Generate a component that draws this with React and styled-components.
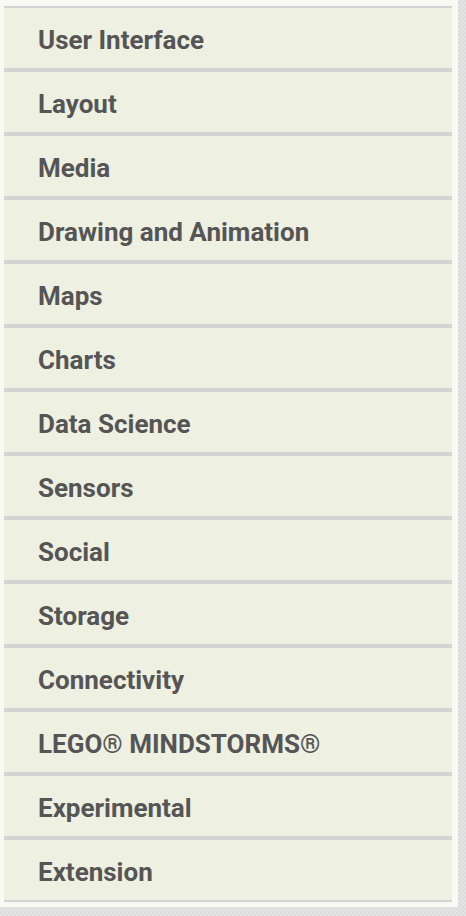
import React from 'react';
import styled, { createGlobalStyle } from 'styled-components';

const Global = createGlobalStyle`
  html, body {
    margin: 0;
    padding: 0;
  }
  body {
    background-color: #dcdcdc;
    background-image:
      linear-gradient(45deg, #e4e4e4 25%, transparent 25%, transparent 75%, #e4e4e4 75%),
      linear-gradient(45deg, #e4e4e4 25%, transparent 25%, transparent 75%, #e4e4e4 75%);
    background-size: 4px 4px;
    background-position: 0 0, 2px 2px;
    font-family: Roboto, "Liberation Sans", sans-serif;
  }
`;

const Panel = styled.div`
  width: 458px;
  box-sizing: border-box;
  padding: 6px 6px 5px 4px;
  background-color: #f8f9f2;
`;

const List = styled.ul`
  margin: 0;
  padding: 0;
  list-style: none;
`;

const Item = styled.li`
  height: 64px;
  box-sizing: border-box;
  display: flex;
  align-items: center;
  padding: 4px 0 0 34px;
  background-color: #eef0e2;
  border-top: 2px solid #d3d3d3;
  border-bottom: 2px solid #d3d3d3;
  font-size: 26px;
  font-weight: 700;
  color: #555555;
  cursor: pointer;
`;

const categories = [
  'User Interface',
  'Layout',
  'Media',
  'Drawing and Animation',
  'Maps',
  'Charts',
  'Data Science',
  'Sensors',
  'Social',
  'Storage',
  'Connectivity',
  'LEGO® MINDSTORMS®',
  'Experimental',
  'Extension',
];

export default function App() {
  return (
    <>
      <Global />
      <Panel>
        <List>
          {categories.map((c) => (
            <Item key={c}>{c}</Item>
          ))}
        </List>
      </Panel>
    </>
  );
}
